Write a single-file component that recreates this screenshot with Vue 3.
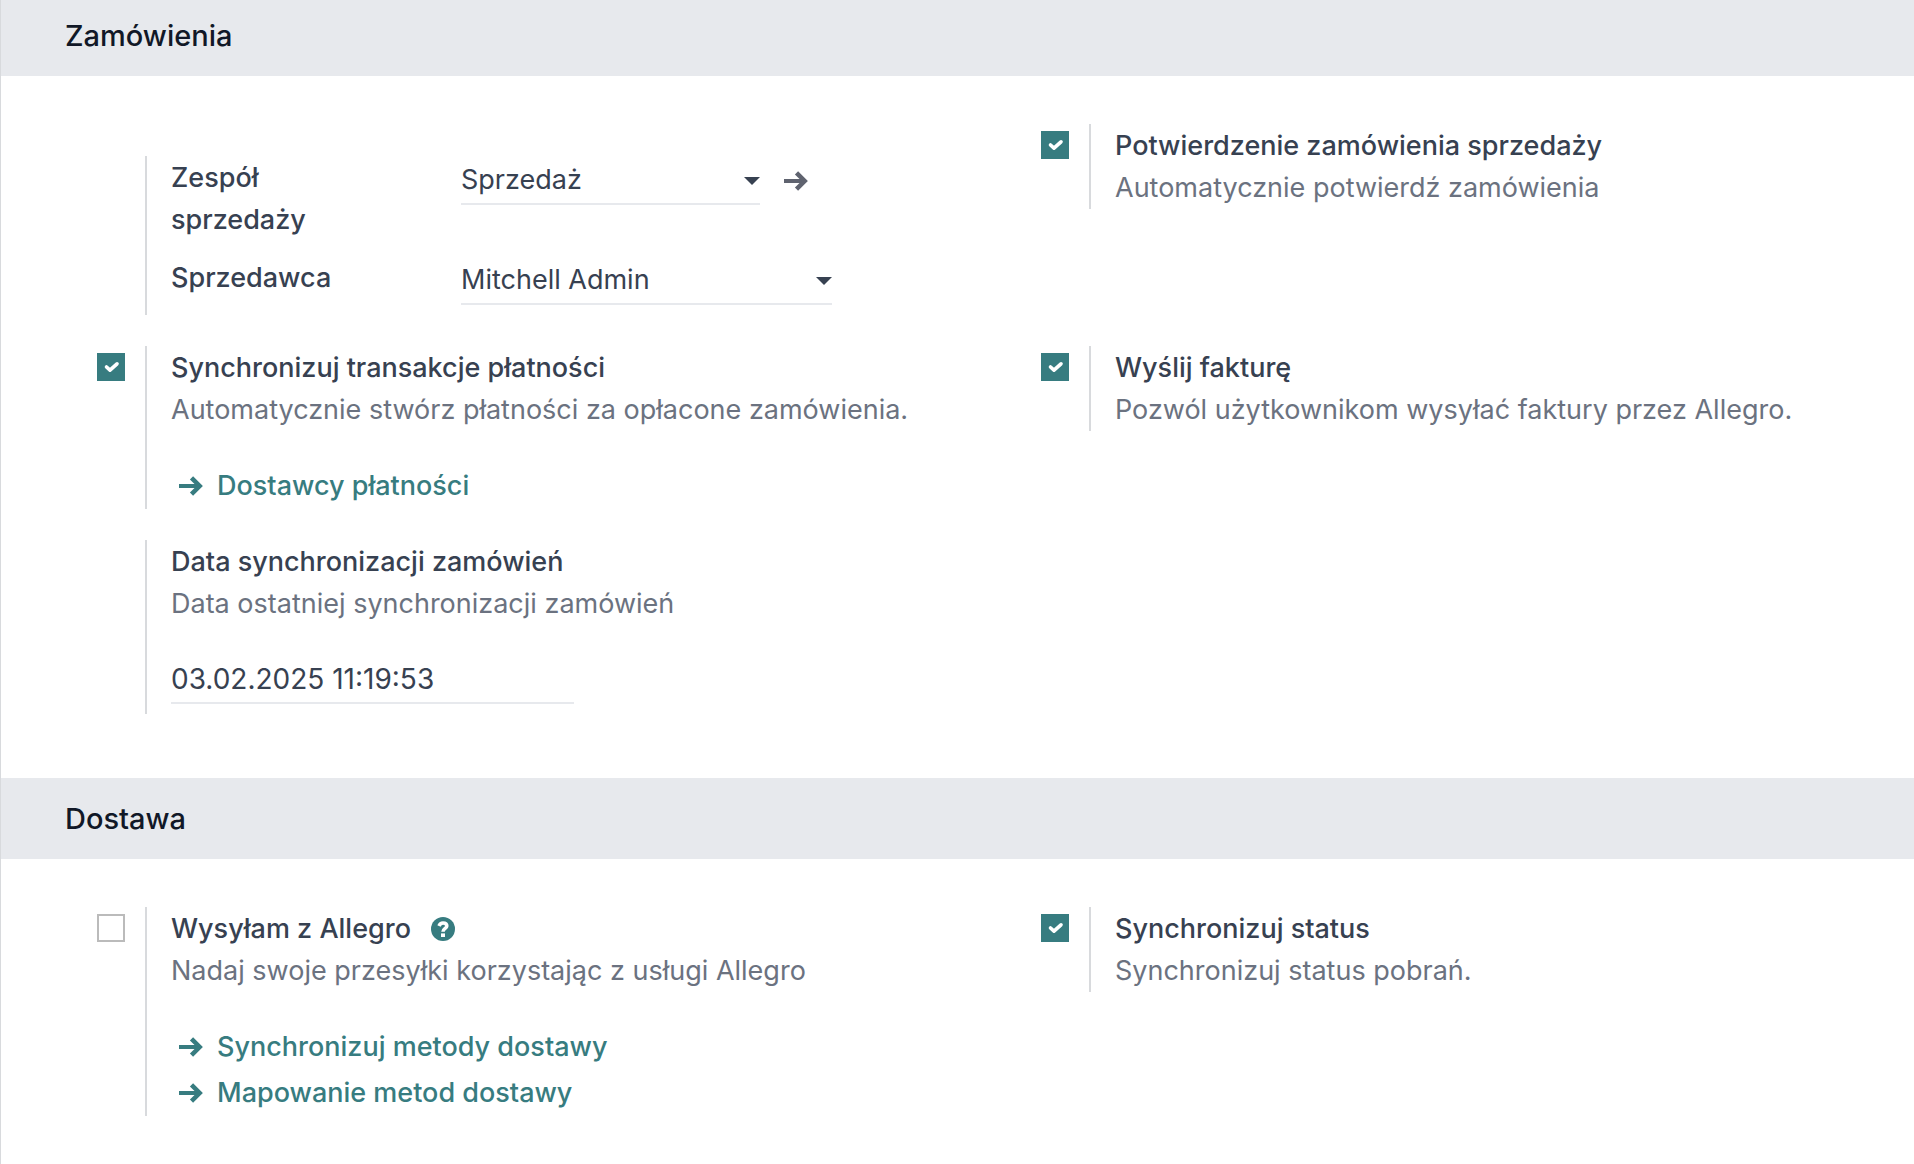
<script setup>
import { ref } from 'vue'

const team = ref('Sprzedaż')
const salesperson = ref('Mitchell Admin')
const syncDate = ref('03.02.2025 11:19:53')
const confirmOrder = ref(true)
const syncPayments = ref(true)
const sendInvoice = ref(true)
const shipWithAllegro = ref(false)
const syncStatus = ref(true)
</script>

<template>
  <main class="settings">
    <section>
      <h2 class="heading heading-first">Zamówienia</h2>
      <div class="grid">
        <div class="setting setting-fields">
          <div class="body fields">
            <label class="title" for="team">Zespół sprzedaży</label>
            <div class="field-row">
              <div class="picker">
                <select id="team" v-model="team" class="control">
                  <option>Sprzedaż</option>
                </select>
                <svg class="caret" viewBox="0 0 16 8" aria-hidden="true"><path d="M0 0H16L8 8Z" /></svg>
              </div>
              <button class="open" type="button" aria-label="Otwórz">
                <svg class="arrow" viewBox="0 0 24 20" aria-hidden="true"><path d="M0 10H20" /><path class="head" d="M12.500 1.800L20.700 10L12.500 18.200" /></svg>
              </button>
            </div>
            <label class="title" for="salesperson">Sprzedawca</label>
            <div class="picker">
              <select id="salesperson" v-model="salesperson" class="control">
                <option>Mitchell Admin</option>
              </select>
              <svg class="caret" viewBox="0 0 16 8" aria-hidden="true"><path d="M0 0H16L8 8Z" /></svg>
            </div>
          </div>
        </div>

        <div class="setting">
          <div class="check">
            <input id="confirm" v-model="confirmOrder" type="checkbox" />
            <svg viewBox="0 0 28 28" aria-hidden="true"><path d="M9.500 14L13 17.200L20 10.800" /></svg>
          </div>
          <div class="body">
            <label class="title" for="confirm">Potwierdzenie zamówienia sprzedaży</label>
            <p class="hint">Automatycznie potwierdź zamówienia</p>
          </div>
        </div>

        <div class="setting">
          <div class="check">
            <input id="payments" v-model="syncPayments" type="checkbox" />
            <svg viewBox="0 0 28 28" aria-hidden="true"><path d="M9.500 14L13 17.200L20 10.800" /></svg>
          </div>
          <div class="body">
            <label class="title" for="payments">Synchronizuj transakcje płatności</label>
            <p class="hint">Automatycznie stwórz płatności za opłacone zamówienia.</p>
            <nav class="links">
              <a class="link" href="#providers">
                <svg class="arrow" viewBox="0 0 24 20" aria-hidden="true"><path d="M0 10H20" /><path class="head" d="M12.500 1.800L20.700 10L12.500 18.200" /></svg>Dostawcy płatności
              </a>
            </nav>
          </div>
        </div>

        <div class="setting">
          <div class="check">
            <input id="invoice" v-model="sendInvoice" type="checkbox" />
            <svg viewBox="0 0 28 28" aria-hidden="true"><path d="M9.500 14L13 17.200L20 10.800" /></svg>
          </div>
          <div class="body">
            <label class="title" for="invoice">Wyślij fakturę</label>
            <p class="hint">Pozwól użytkownikom wysyłać faktury przez Allegro.</p>
          </div>
        </div>

        <div class="setting">
          <div class="body">
            <label class="title" for="sync-date">Data synchronizacji zamówień</label>
            <p class="hint">Data ostatniej synchronizacji zamówień</p>
            <input id="sync-date" v-model="syncDate" class="control date" type="text" />
          </div>
        </div>
      </div>
    </section>

    <section>
      <h2 class="heading">Dostawa</h2>
      <div class="grid">
        <div class="setting">
          <div class="check">
            <input id="ship" v-model="shipWithAllegro" type="checkbox" />
            <svg viewBox="0 0 28 28" aria-hidden="true"><path d="M9.500 14L13 17.200L20 10.800" /></svg>
          </div>
          <div class="body">
            <div class="title-row">
              <label class="title" for="ship">Wysyłam z Allegro</label>
              <a class="help" href="#help" aria-label="Pomoc">
                <svg viewBox="0 0 24 24" aria-hidden="true">
                  <circle cx="12" cy="12" r="12" />
                  <path d="M8 9C8.800 7 10 6 12 6C14.300 6 15.800 7.200 15.800 8.900C15.800 11.400 12 11.400 12 14.800" />
                  <rect x="10" y="16.400" width="4" height="3.600" />
                </svg>
              </a>
            </div>
            <p class="hint">Nadaj swoje przesyłki korzystając z usługi Allegro</p>
            <nav class="links">
              <a class="link" href="#sync-methods">
                <svg class="arrow" viewBox="0 0 24 20" aria-hidden="true"><path d="M0 10H20" /><path class="head" d="M12.500 1.800L20.700 10L12.500 18.200" /></svg>Synchronizuj metody dostawy
              </a>
              <a class="link" href="#map-methods">
                <svg class="arrow" viewBox="0 0 24 20" aria-hidden="true"><path d="M0 10H20" /><path class="head" d="M12.500 1.800L20.700 10L12.500 18.200" /></svg>Mapowanie metod dostawy
              </a>
            </nav>
          </div>
        </div>

        <div class="setting">
          <div class="check">
            <input id="status" v-model="syncStatus" type="checkbox" />
            <svg viewBox="0 0 28 28" aria-hidden="true"><path d="M9.500 14L13 17.200L20 10.800" /></svg>
          </div>
          <div class="body">
            <label class="title" for="status">Synchronizuj status</label>
            <p class="hint">Synchronizuj status pobrań.</p>
          </div>
        </div>
      </div>
    </section>
  </main>
</template>

<style>
body {
  margin: 0;
  background: #ffffff;
}
</style>

<style scoped>
.settings {
  box-sizing: border-box;
  min-height: 100vh;
  border-left: 1px solid #d8dadd;
  color: #374151;
  font-family: Inter, "Liberation Sans", sans-serif;
  font-size: 27px;
  line-height: 42px;
}

.heading {
  margin: 0;
  padding: 20px 64px 19px;
  background: #e7e9ed;
  color: #111827;
  font-size: 29px;
  font-weight: 500;
}

.heading-first {
  padding-top: 15px;
}

.grid {
  display: grid;
  grid-template-columns: repeat(2, minmax(0, 1fr));
  align-items: start;
  row-gap: 31px;
  padding: 48px 13px 64px 12px;
}

.setting {
  display: grid;
  grid-template-columns: 132px minmax(0, 1fr);
}

.setting-fields {
  padding-top: 32px;
}

.body {
  grid-column: 2;
  padding: 1px 0 0 24px;
  border-left: 2px solid #d8dadd;
}

.title {
  display: block;
  font-weight: 500;
}

.hint {
  margin: 0;
  color: #6b7280;
}

.check {
  display: grid;
  width: 28px;
  height: 28px;
  margin: 7px 0 0 84px;
}

.check input,
.check svg {
  grid-area: 1 / 1;
  width: 28px;
  height: 28px;
}

.check input {
  appearance: none;
  box-sizing: border-box;
  margin: 0;
  border: 2px solid #bbbbbb;
  background: #ffffff;
}

.check input:checked {
  border-color: #377c80;
  background: #377c80;
}

.check svg {
  visibility: hidden;
  pointer-events: none;
  fill: none;
  stroke: #ffffff;
  stroke-width: 3.600;
  stroke-linecap: round;
  stroke-linejoin: round;
}

.check input:checked + svg {
  visibility: visible;
}

.fields {
  display: grid;
  grid-template-columns: 210px minmax(0, 371px);
  column-gap: 80px;
  row-gap: 16px;
  align-items: start;
  padding-bottom: 10px;
}

.field-row {
  display: flex;
  align-items: center;
}

.picker {
  display: grid;
  flex: 1;
  align-items: center;
}

.picker .control,
.caret {
  grid-area: 1 / 1;
}

.control {
  appearance: none;
  box-sizing: border-box;
  width: 100%;
  height: 48px;
  margin: 0;
  padding: 2px 0;
  border: 0;
  border-bottom: 2px solid #e7e9ed;
  border-radius: 0;
  background: transparent;
  color: inherit;
  font: inherit;
}

.caret {
  justify-self: end;
  width: 16px;
  height: 8px;
  fill: #374151;
  pointer-events: none;
}

.open {
  display: flex;
  margin: 0;
  padding: 0 24px;
  border: 0;
  background: none;
  color: #5f636f;
}

.arrow {
  flex: none;
  width: 24px;
  height: 20px;
  fill: none;
  stroke: currentColor;
  stroke-width: 4;
}

.arrow .head {
  stroke-width: 4.500;
}

.date {
  display: block;
  max-width: 403px;
  margin: 31px 0 10px;
  font-size: 28px;
}

.links {
  display: flex;
  flex-direction: column;
  align-items: start;
  margin-top: 32px;
}

.link {
  display: flex;
  align-items: center;
  gap: 14px;
  padding: 2px 8px;
  color: #377c80;
  font-weight: 500;
  text-decoration: none;
}

.title-row {
  display: flex;
  align-items: center;
  gap: 20px;
}

.help {
  display: flex;
  color: #377c80;
}

.help svg {
  width: 24px;
  height: 24px;
  fill: currentColor;
}

.help path {
  fill: none;
  stroke: #ffffff;
  stroke-width: 3.600;
}

.help rect {
  fill: #ffffff;
}
</style>
